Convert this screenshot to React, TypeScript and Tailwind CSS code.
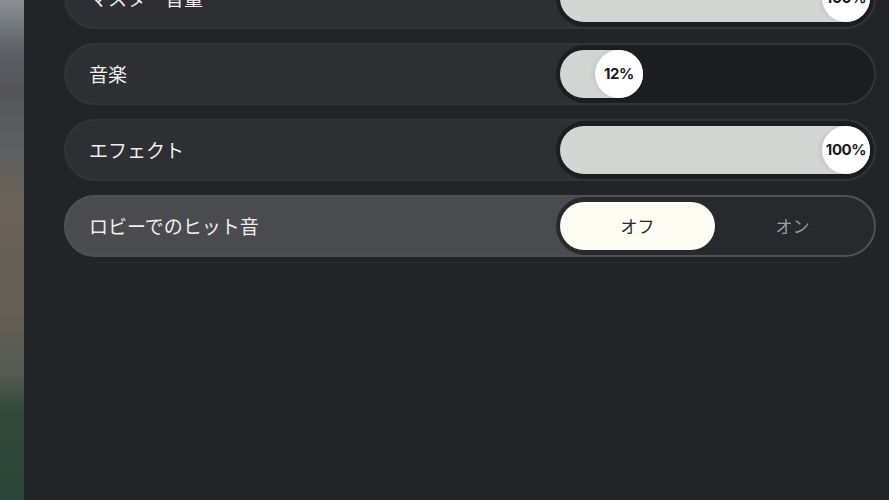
import React from 'react';

type SliderRow = { kind: 'slider'; label: string; value: number };
type ToggleRow = { kind: 'toggle'; label: string; on: boolean; active?: boolean };
type Row = SliderRow | ToggleRow;

const rows: Row[] = [
  { kind: 'slider', label: 'マスター音量', value: 100 },
  { kind: 'slider', label: '音楽', value: 12 },
  { kind: 'slider', label: 'エフェクト', value: 100 },
  { kind: 'toggle', label: 'ロビーでのヒット音', on: false, active: true },
];

const jp = "font-['Noto_Sans_CJK_JP','Noto_Sans',sans-serif]";

function Slider({ value }: { value: number }) {
  // fill never narrower than the knob
  const fill = `calc(52px + (100% - 52px) * ${value / 100})`;
  return (
    <div className="w-[318px] h-full rounded-full bg-[#1c1d20] px-[4px] py-[5px]">
      <div className="h-full w-full">
        <div className="h-full rounded-full bg-[#d3d5d3] flex justify-end" style={{ width: fill }}>
          <div className="h-full aspect-square rounded-full bg-white flex items-center justify-center shadow-[-2px_0_4px_rgba(0,0,0,0.08)]">
            <span className="font-['Inter','Roboto',sans-serif] font-bold text-[15px] tracking-[-0.4px] text-[#1b1b1d]">
              {value}%
            </span>
          </div>
        </div>
      </div>
    </div>
  );
}

function Toggle({ on }: { on: boolean }) {
  return (
    <div className={`w-[318px] h-full rounded-full bg-[#28292c] px-[4px] py-[5px] flex ${jp}`}>
      <div
        className={`flex-1 rounded-full flex items-center justify-center text-[17px] ${
          !on ? 'bg-[#fdfcf2] text-[#2a2a2a]' : 'text-[#9c9c9e]'
        }`}
      >
        オフ
      </div>
      <div
        className={`flex-1 rounded-full flex items-center justify-center text-[17px] ${
          on ? 'bg-[#fdfcf2] text-[#2a2a2a]' : 'text-[#9c9c9e]'
        }`}
      >
        オン
      </div>
    </div>
  );
}

export default function App() {
  return (
    <div className="flex h-[500px] w-[889px] overflow-hidden bg-[#232428]">
      <div className="w-[24px] h-full bg-[linear-gradient(to_bottom,#8a9196_0%,#5d6065_10%,#555458_18%,#5b5f62_28%,#6a6258_40%,#665f56_62%,#525a52_75%,#34483c_82%,#2a4638_100%)]" />
      <div className="flex-1 pl-[40px] pr-[13px]">
        <div className="-mt-[33px] flex flex-col gap-[14px]">
          {rows.map((row) => {
            const active = row.kind === 'toggle' && row.active;
            return (
              <div
                key={row.label}
                className={`h-[62px] rounded-full border-2 flex items-center justify-between ${
                  active ? 'bg-[#4a4b4e] border-[#505155]' : 'bg-[#2e2f33] border-[#333438]'
                }`}
              >
                <span className={`pl-[23px] text-[19px] text-[#eeeeee] ${jp}`}>{row.label}</span>
                {row.kind === 'slider' ? <Slider value={row.value} /> : <Toggle on={row.on} />}
              </div>
            );
          })}
        </div>
      </div>
    </div>
  );
}
